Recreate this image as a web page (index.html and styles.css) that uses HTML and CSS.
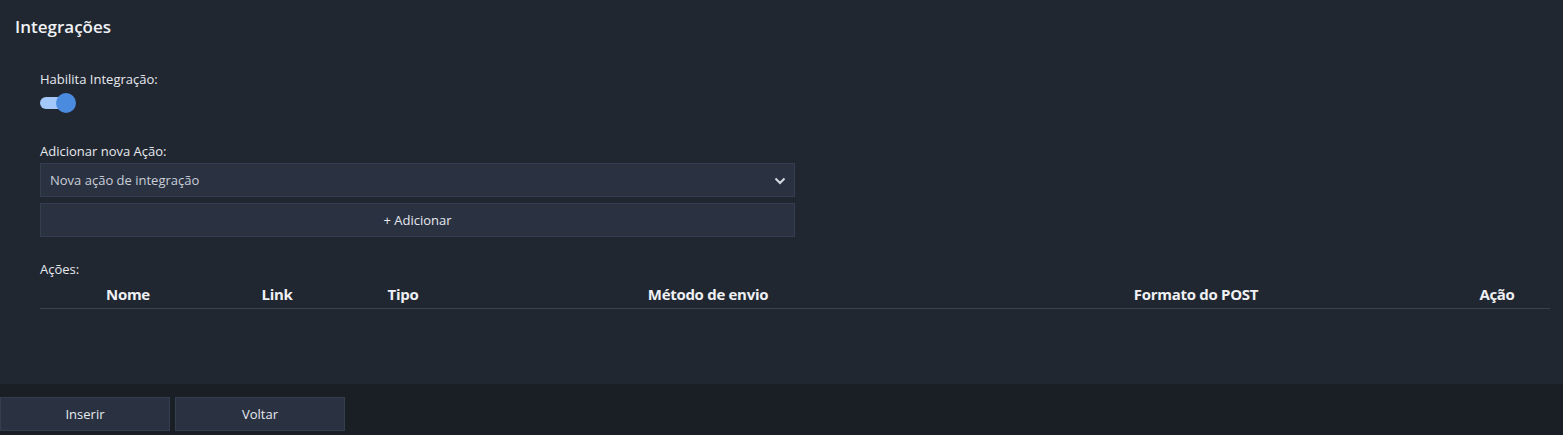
FILE: index.html
```html
<!DOCTYPE html>
<html lang="pt">
<head>
<meta charset="utf-8">
<title>Integrações</title>
<link rel="stylesheet" href="styles.css">
</head>
<body>
<main class="panel">
  <h1 class="title">Integrações</h1>
  <section class="form">
    <div class="field">
      <label class="label">Habilita Integração:</label>
      <span class="toggle"><span class="track"></span><span class="thumb"></span></span>
    </div>
    <div class="field field-action">
      <label class="label">Adicionar nova Ação:</label>
      <div class="select">
        <span>Nova ação de integração</span>
        <svg class="chev" width="12" height="8" viewBox="0 0 12 8"><path d="M1.5 1.5 L6 6 L10.5 1.5" fill="none" stroke="#d6dae2" stroke-width="2"/></svg>
      </div>
      <button class="btn-add">+ Adicionar</button>
    </div>
    <div class="field field-table">
      <label class="label">Ações:</label>
      <div class="table-head">
        <span>Nome</span>
        <span>Link</span>
        <span>Tipo</span>
        <span>Método de envio</span>
        <span>Formato do POST</span>
        <span>Ação</span>
      </div>
    </div>
  </section>
</main>
<footer class="footer">
  <button class="btn">Inserir</button>
  <button class="btn">Voltar</button>
</footer>
</body>
</html>
```
FILE: styles.css
```css
* { box-sizing: border-box; }
html, body { margin: 0; padding: 0; }
body {
  background: #1a1e25;
  font-family: "Open Sans", "Noto Sans", sans-serif;
  color: #e6e9ee;
  width: 1563px;
  height: 435px;
  overflow: hidden;
}
.panel {
  background: #212731;
  height: 384px;
  padding: 15px 13px 0 15px;
}
.title {
  margin: 0;
  font-size: 17px;
  font-weight: 600;
  line-height: 24px;
  color: #f0f2f5;
}
.form {
  padding-left: 25px;
  padding-top: 31px;
}
.field { display: flex; flex-direction: column; align-items: flex-start; }
.label {
  font-size: 13px;
  line-height: 18px;
  color: #e6e9ee;
}
.toggle {
  position: relative;
  display: block;
  width: 36px;
  height: 20px;
  margin-top: 5px;
}
.track {
  position: absolute;
  left: 0; top: 4px;
  width: 28px; height: 12px;
  border-radius: 6px;
  background: #a5c8fb;
}
.thumb {
  position: absolute;
  left: 16px; top: 0;
  width: 20px; height: 20px;
  border-radius: 50%;
  background: #4a8be0;
}
.field-action { margin-top: 29px; align-items: stretch; width: 755px; }
.field-action .label { align-self: flex-start; }
.select {
  margin-top: 3px;
  height: 34px;
  background: #2a3242;
  border: 1px solid #353e4e;
  display: flex;
  align-items: center;
  justify-content: space-between;
  padding: 0 8px 0 9px;
  font-size: 13px;
  color: #c9ced7;
}
.chev { margin-top: 1px; }
.btn-add {
  margin-top: 6px;
  height: 34px;
  background: #2a3242;
  border: 1px solid #353e4e;
  color: #e6e9ee;
  font-family: inherit;
  font-size: 13px;
}
.field-table { margin-top: 23px; align-items: stretch; width: 1510px; }
.field-table .label { align-self: flex-start; }
.table-head {
  display: grid;
  grid-template-columns: 176px 122px 130px 480px 496px 106px;
  border-bottom: 1px solid #3a4150;
  padding: 6px 0 4px;
  font-size: 15px;
  font-weight: 700;
  letter-spacing: -0.3px;
  color: #eef0f3;
}
.table-head span { text-align: center; line-height: 20px; }
.footer {
  display: flex;
  gap: 5px;
  padding-top: 13px;
}
.btn {
  width: 170px;
  height: 34px;
  background: #2a3242;
  border: 1px solid #353e4e;
  color: #e6e9ee;
  font-family: inherit;
  font-size: 13px;
}
```
